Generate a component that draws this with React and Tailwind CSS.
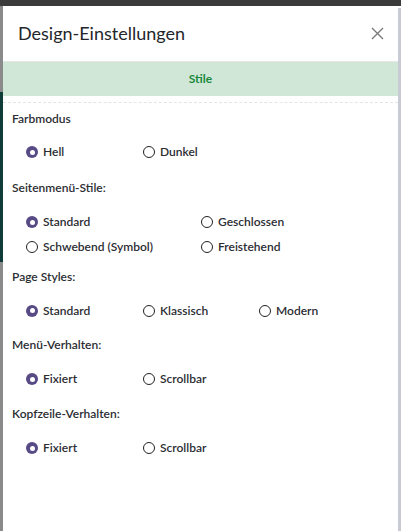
import { useState } from 'react'

const font = { fontFamily: 'Lato, "Open Sans", sans-serif' }

function Radio({ label, checked, onClick }) {
  return (
    <label onClick={onClick} className="flex items-center gap-[5px] cursor-pointer">
      {checked ? (
        <span className="w-[12px] h-[12px] rounded-full bg-[#574a85] flex items-center justify-center">
          <span className="w-[5px] h-[5px] rounded-full bg-white" />
        </span>
      ) : (
        <span className="w-[12px] h-[12px] rounded-full border border-[#222] bg-white" />
      )}
      <span className="text-[12px] font-semibold text-[#2b2d33] leading-none">{label}</span>
    </label>
  )
}

function Section({ title, children }) {
  return (
    <div>
      <div className="text-[12px] font-semibold text-[#2b2d33] h-[15px] flex items-center">{title}</div>
      {children}
    </div>
  )
}

export default function App() {
  const [mode, setMode] = useState('hell')
  const [side, setSide] = useState('standard')
  const [page, setPage] = useState('standard')
  const [menu, setMenu] = useState('fix')
  const [head, setHead] = useState('fix')

  return (
    <div className="w-[401px] h-[531px] bg-[#3b3b3b] flex flex-col overflow-hidden" style={font}>
      <div className="h-[6px] shrink-0" />
      <div className="flex flex-1">
        {/* background peeking at the left */}
        <div className="w-[3px] flex flex-col">
          <div className="h-[86px] bg-[#8a8a8a]" />
          <div className="h-[170px] bg-[#0f3b38]" />
          <div className="flex-1 bg-[#8a8a8a]" />
        </div>

        <div className="flex-1 bg-white flex flex-col">
          {/* header */}
          <div className="h-[56px] flex items-center justify-between pl-[15px] pr-[14px] border-b border-[#e6e6e6]">
            <h2 className="text-[18px] text-[#24262b] font-normal">Design-Einstellungen</h2>
            <svg width="13" height="13" viewBox="0 0 13 13" className="text-[#7a7a7a]">
              <path d="M1 1L12 12M12 1L1 12" stroke="currentColor" strokeWidth="1.4" fill="none" />
            </svg>
          </div>

          {/* tab */}
          <div className="h-[34px] bg-[#d0e7d8] flex items-center justify-center">
            <span className="text-[12px] font-bold text-[#1b8a3e]">Stile</span>
          </div>

          <div className="mt-[6px] border-t border-dashed border-[#e4e4e4]" />

          <div className="px-[9px] pt-[8px] flex flex-col">
            <Section title="Farbmodus">
              <div className="flex h-[54px] items-center pl-[14px] pb-[2px]">
                <div className="w-[117px]"><Radio label="Hell" checked={mode === 'hell'} onClick={() => setMode('hell')} /></div>
                <Radio label="Dunkel" checked={mode === 'dunkel'} onClick={() => setMode('dunkel')} />
              </div>
            </Section>

            <Section title="Seitenmenü-Stile:">
              <div className="grid grid-cols-[175px_auto] gap-y-[13px] pl-[14px] pt-[21px] pb-[16px]">
                <Radio label="Standard" checked={side === 'standard'} onClick={() => setSide('standard')} />
                <Radio label="Geschlossen" checked={side === 'geschlossen'} onClick={() => setSide('geschlossen')} />
                <Radio label="Schwebend (Symbol)" checked={side === 'schwebend'} onClick={() => setSide('schwebend')} />
                <Radio label="Freistehend" checked={side === 'frei'} onClick={() => setSide('frei')} />
              </div>
            </Section>

            <Section title="Page Styles:">
              <div className="flex h-[53px] items-center pl-[14px]">
                <div className="w-[117px]"><Radio label="Standard" checked={page === 'standard'} onClick={() => setPage('standard')} /></div>
                <div className="w-[116px]"><Radio label="Klassisch" checked={page === 'klassisch'} onClick={() => setPage('klassisch')} /></div>
                <Radio label="Modern" checked={page === 'modern'} onClick={() => setPage('modern')} />
              </div>
            </Section>

            <Section title="Menü-Verhalten:">
              <div className="flex h-[54px] items-center pl-[14px]">
                <div className="w-[117px]"><Radio label="Fixiert" checked={menu === 'fix'} onClick={() => setMenu('fix')} /></div>
                <Radio label="Scrollbar" checked={menu === 'scroll'} onClick={() => setMenu('scroll')} />
              </div>
            </Section>

            <Section title="Kopfzeile-Verhalten:">
              <div className="flex h-[54px] items-center pl-[14px]">
                <div className="w-[117px]"><Radio label="Fixiert" checked={head === 'fix'} onClick={() => setHead('fix')} /></div>
                <Radio label="Scrollbar" checked={head === 'scroll'} onClick={() => setHead('scroll')} />
              </div>
            </Section>
          </div>
        </div>

        {/* scrollbar strip */}
        <div className="w-[3px] bg-white flex flex-col">
          <div className="h-[2px]" />
          <div className="flex-1 bg-[#c8cbd3]" />
        </div>
      </div>
    </div>
  )
}
